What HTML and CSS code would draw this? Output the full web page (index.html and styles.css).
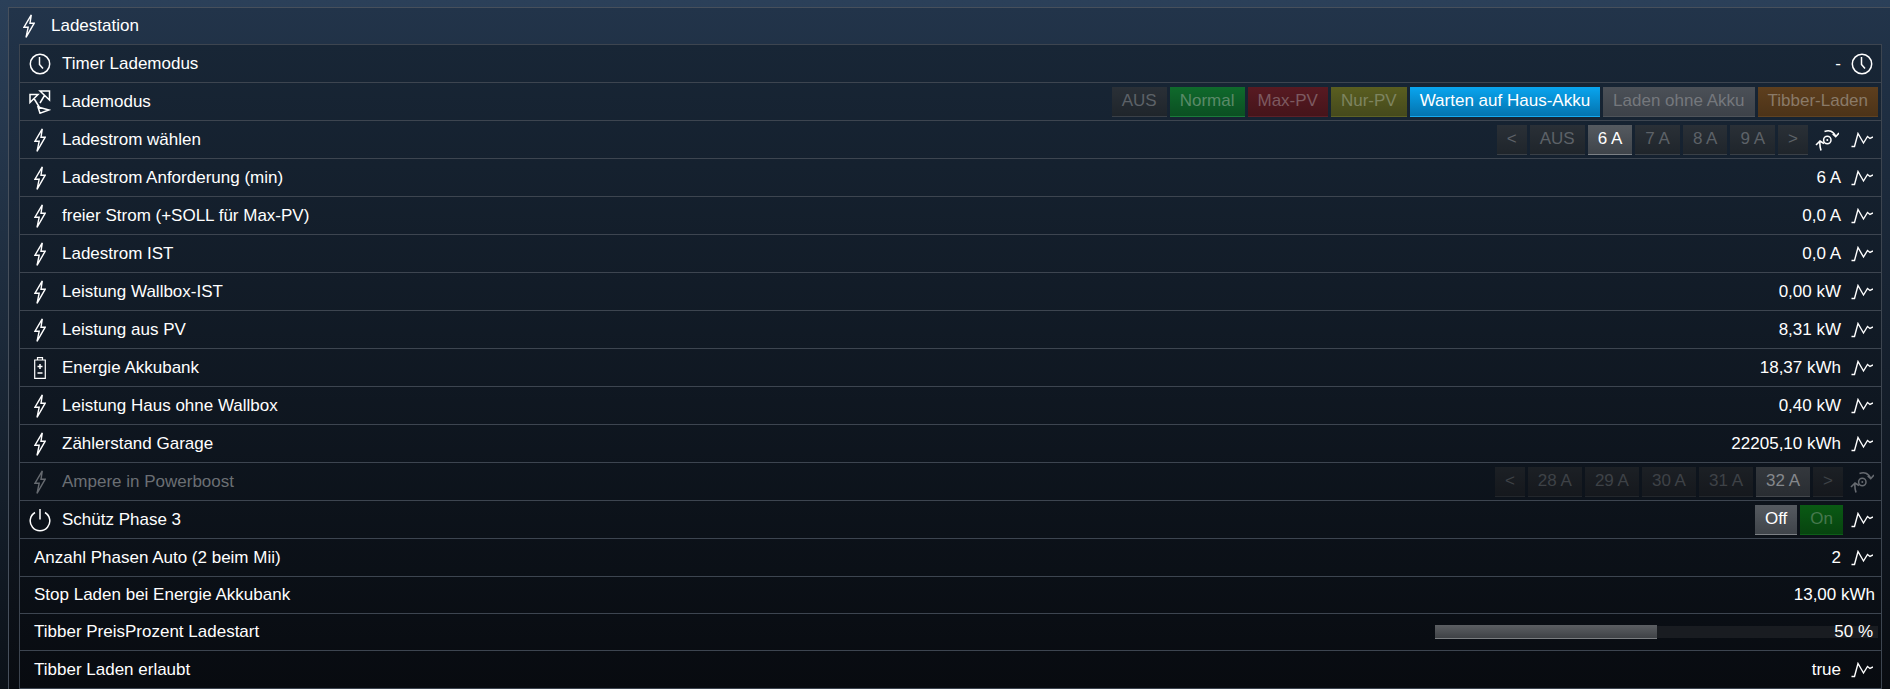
FILE: index.html
```html
<!DOCTYPE html>
<html lang="de">
<head>
<meta charset="utf-8">
<title>Ladestation</title>
<link rel="stylesheet" href="styles.css">
</head>
<body>
<svg class="defs" width="0" height="0">
  <defs>
    <symbol id="bolt" viewBox="0 0 12 24"><path d="M8.300 .8 1 13.200h4.200L3 23.300 11.200 9.200H7z" fill="none" stroke="currentColor" stroke-width="1.400"/></symbol>
    <symbol id="clock" viewBox="0 0 22 22"><circle cx="11" cy="11" r="9.700" fill="none" stroke="currentColor" stroke-width="1.500"/><path d="M10.500 4v7.500l3.500 4" fill="none" stroke="currentColor" stroke-width="1.500"/></symbol>
    <symbol id="chart" viewBox="0 0 22 16"><path d="M.5 14.500h3L7 1.500l5.500 9.500 4-6.500 2.500 2 3-1.500" fill="none" stroke="currentColor" stroke-width="1.400"/></symbol>
    <symbol id="sync" viewBox="0 0 24 22"><circle cx="12.300" cy="11" r="3.700" fill="none" stroke="currentColor" stroke-width="1.500"/><circle cx="12.300" cy="11" r="1" fill="currentColor"/><path d="M6 21.500C5 18 4.500 15 5 12M1 16l4-4 4 2.500M9.500 2.600C14 .8 18.500 2 20.700 7.700M17.700 5l3 2.700L24 4" fill="none" stroke="currentColor" stroke-width="1.600"/></symbol>
    <symbol id="mode" viewBox="0 0 22 24"><path d="M1 4.500h8l-8 8zM11 1h9.500v9zM9 17l11 3-9 3.200zM5 8.500l5.500 9M15.500 5.500 11 13" fill="none" stroke="currentColor" stroke-width="1.500"/></symbol>
    <symbol id="battery" viewBox="0 0 12 22"><path d="M3.500 3V.7h5V3M.7 3h10.600v18.300H.7z" fill="none" stroke="currentColor" stroke-width="1.200"/><path d="M3.500 9.500h5M6 7v5M3.500 16h5" fill="none" stroke="currentColor" stroke-width="1.500"/></symbol>
    <symbol id="power" viewBox="0 0 22 22"><path d="M11 0v10.500M6 3.500a9.800 9.800 0 1 0 10 0" fill="none" stroke="currentColor" stroke-width="1.500"/></symbol>
  </defs>
</svg>
<section class="panel">
  <header class="panel-head">
    <svg class="icon bolt"><use href="#bolt"/></svg>
    <span>Ladestation</span>
  </header>
  <div class="list">
    <div class="row">
      <svg class="icon lead"><use href="#clock"/></svg>
      <span class="label">Timer Lademodus</span>
      <span class="value">-</span>
      <svg class="icon trail-clock"><use href="#clock"/></svg>
    </div>
    <div class="row">
      <svg class="icon lead"><use href="#mode"/></svg>
      <span class="label">Lademodus</span>
      <div class="buttons wide">
        <span class="btn">AUS</span>
        <span class="btn green">Normal</span>
        <span class="btn red">Max-PV</span>
        <span class="btn olive">Nur-PV</span>
        <span class="btn blue">Warten auf Haus-Akku</span>
        <span class="btn grey">Laden ohne Akku</span>
        <span class="btn brown">Tibber-Laden</span>
      </div>
    </div>
    <div class="row">
      <svg class="icon bolt"><use href="#bolt"/></svg>
      <span class="label">Ladestrom wählen</span>
      <div class="buttons">
        <span class="btn">&lt;</span>
        <span class="btn">AUS</span>
        <span class="btn active">6 A</span>
        <span class="btn">7 A</span>
        <span class="btn">8 A</span>
        <span class="btn">9 A</span>
        <span class="btn">&gt;</span>
      </div>
      <svg class="icon sync"><use href="#sync"/></svg>
      <svg class="icon chart"><use href="#chart"/></svg>
    </div>
    <div class="row">
      <svg class="icon bolt"><use href="#bolt"/></svg>
      <span class="label">Ladestrom Anforderung (min)</span>
      <span class="value">6 A</span>
      <svg class="icon chart"><use href="#chart"/></svg>
    </div>
    <div class="row">
      <svg class="icon bolt"><use href="#bolt"/></svg>
      <span class="label">freier Strom (+SOLL für Max-PV)</span>
      <span class="value">0,0 A</span>
      <svg class="icon chart"><use href="#chart"/></svg>
    </div>
    <div class="row">
      <svg class="icon bolt"><use href="#bolt"/></svg>
      <span class="label">Ladestrom IST</span>
      <span class="value">0,0 A</span>
      <svg class="icon chart"><use href="#chart"/></svg>
    </div>
    <div class="row">
      <svg class="icon bolt"><use href="#bolt"/></svg>
      <span class="label">Leistung Wallbox-IST</span>
      <span class="value">0,00 kW</span>
      <svg class="icon chart"><use href="#chart"/></svg>
    </div>
    <div class="row">
      <svg class="icon bolt"><use href="#bolt"/></svg>
      <span class="label">Leistung aus PV</span>
      <span class="value">8,31 kW</span>
      <svg class="icon chart"><use href="#chart"/></svg>
    </div>
    <div class="row">
      <svg class="icon battery"><use href="#battery"/></svg>
      <span class="label">Energie Akkubank</span>
      <span class="value">18,37 kWh</span>
      <svg class="icon chart"><use href="#chart"/></svg>
    </div>
    <div class="row">
      <svg class="icon bolt"><use href="#bolt"/></svg>
      <span class="label">Leistung Haus ohne Wallbox</span>
      <span class="value">0,40 kW</span>
      <svg class="icon chart"><use href="#chart"/></svg>
    </div>
    <div class="row">
      <svg class="icon bolt"><use href="#bolt"/></svg>
      <span class="label">Zählerstand Garage</span>
      <span class="value">22205,10 kWh</span>
      <svg class="icon chart"><use href="#chart"/></svg>
    </div>
    <div class="row disabled">
      <svg class="icon bolt"><use href="#bolt"/></svg>
      <span class="label">Ampere in Powerboost</span>
      <div class="buttons">
        <span class="btn">&lt;</span>
        <span class="btn">28 A</span>
        <span class="btn">29 A</span>
        <span class="btn">30 A</span>
        <span class="btn">31 A</span>
        <span class="btn active">32 A</span>
        <span class="btn">&gt;</span>
      </div>
      <svg class="icon sync"><use href="#sync"/></svg>
    </div>
    <div class="row">
      <svg class="icon lead"><use href="#power"/></svg>
      <span class="label">Schütz Phase 3</span>
      <div class="buttons">
        <span class="btn active">Off</span>
        <span class="btn darkgreen">On</span>
      </div>
      <svg class="icon chart"><use href="#chart"/></svg>
    </div>
    <div class="row">
      <span class="label plain">Anzahl Phasen Auto (2 beim Mii)</span>
      <span class="value">2</span>
      <svg class="icon chart"><use href="#chart"/></svg>
    </div>
    <div class="row short">
      <span class="label plain">Stop Laden bei Energie Akkubank</span>
      <span class="value flush">13,00 kWh</span>
    </div>
    <div class="row short">
      <span class="label plain">Tibber PreisProzent Ladestart</span>
      <div class="slider">
        <div class="slider-fill" style="width: 50%"></div>
        <span class="slider-text">50 %</span>
      </div>
    </div>
    <div class="row">
      <span class="label plain">Tibber Laden erlaubt</span>
      <span class="value">true</span>
      <svg class="icon chart"><use href="#chart"/></svg>
    </div>
  </div>
</section>
</body>
</html>
```

FILE: styles.css
```css
* { box-sizing: border-box; }
html, body { height: 100%; }
body {
  margin: 0;
  padding: 7px 0 0 8px;
  overflow: hidden;
  color: #fff;
  font-family: "Liberation Sans", Arial, sans-serif;
  font-size: 17px;
  background: linear-gradient(180deg, #2b4059 0%, #0b1118 100%);
}
.defs { position: absolute; }
.panel {
  border: 1px solid #47505c;
  border-right: 0;
  border-bottom: 0;
  padding-left: 10px;
  padding-right: 8px;
  background: linear-gradient(180deg, #22344a 0%, #090c11 100%);
}
.panel-head {
  height: 36px;
  display: flex;
  align-items: center;
}
.panel-head .bolt { margin: 0 16px 0 4px; }
.list {
  border: 1px solid #3d4550;
  border-bottom: 0;
  background: linear-gradient(180deg, #182636 0%, #080b10 100%);
}
.row {
  height: 38px;
  padding-right: 8px;
  border-bottom: 1px solid #3d4550;
  display: flex;
  align-items: center;
}
.row.short { height: 37px; }
.row.disabled { color: #6b6f74; }
.icon { flex: none; color: #fff; }
.row.disabled .icon { color: #666a70; }
.bolt { width: 12px; height: 24px; }
.row .bolt { margin: 0 16px 0 14px; }
.battery { width: 12px; height: 22px; margin: 0 16px 0 14px; }
.lead { width: 22px; height: 24px; margin: 0 11px 0 9px; }
.trail-clock { width: 22px; height: 22px; margin-left: 10px; }
.chart { width: 22px; height: 16px; margin-left: 10px; }
.sync { width: 24px; height: 22px; margin-left: 7px; }
.sync + .chart { margin-left: 12px; }
.buttons + .chart { margin-left: 8px; }
.row.disabled .sync { margin-right: -1px; }
.label.plain { margin-left: 14px; }
.value { margin-left: auto; }
.value.flush { margin-right: -2px; }
.buttons { margin-left: auto; display: flex; gap: 3px; }
.buttons.wide { margin-right: -5px; }
.btn {
  height: 30px;
  padding: 0 10px;
  display: flex;
  align-items: center;
  color: #5d6268;
  background: linear-gradient(180deg, #2a3037 0%, #1f252b 100%);
  border-bottom: 1px solid #3a4047;
}
.btn.active { color: #fff; background: linear-gradient(180deg, #555a60 0%, #3f444a 100%); border-bottom-color: #7c8085; }
.row.disabled .btn { color: #3e4247; background: linear-gradient(180deg, #1c2025 0%, #15181d 100%); border-bottom-color: #23272c; }
.row.disabled .btn.active { color: #85888c; background: linear-gradient(180deg, #34383d 0%, #292d32 100%); border-bottom-color: #43474c; }
.btn.green { color: #5a8a68; background: linear-gradient(180deg, #0f6a2c 0%, #0b4f22 100%); border-bottom-color: #1a7a3a; }
.btn.red { color: #7d5a60; background: linear-gradient(180deg, #581a22 0%, #45141a 100%); border-bottom-color: #5c2028; }
.btn.olive { color: #7e8460; background: linear-gradient(180deg, #5a5e20 0%, #45491c 100%); border-bottom-color: #5d6126; }
.btn.blue { color: #fff; background: linear-gradient(180deg, #09a5ef 0%, #0473ae 100%); border-bottom-color: #16a8ee; }
.btn.grey { color: #75787d; background: linear-gradient(180deg, #4b5057 0%, #3d4249 100%); border-bottom-color: #4e5359; }
.btn.brown { color: #8a7a68; background: linear-gradient(180deg, #5e3f1e 0%, #4c3318 100%); border-bottom-color: #5f4222; }
.btn.darkgreen { color: #46784e; background: linear-gradient(180deg, #0a5a14 0%, #07440f 100%); border-bottom-color: #0d5e18; }
.slider {
  margin-left: auto;
  margin-right: -5px;
  width: 443px;
  height: 12px;
  position: relative;
  background: #191c21;
}
.slider-fill {
  position: absolute;
  left: 0;
  top: -1px;
  height: 14px;
  background: linear-gradient(180deg, #5c5f63 0%, #3f4246 100%);
  border-bottom: 1px solid #7a7d80;
}
.slider-text {
  position: absolute;
  right: 5px;
  top: -3px;
  line-height: 18px;
}
```
